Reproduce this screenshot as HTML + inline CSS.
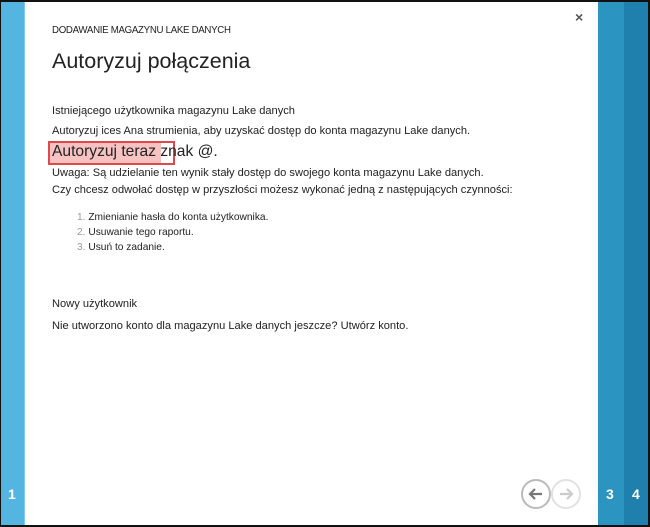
<!DOCTYPE html>
<html><head><meta charset="utf-8"><style>
*{margin:0;padding:0;box-sizing:border-box}
body{width:650px;height:527px;background:#111;position:relative;overflow:hidden;font-family:"Liberation Sans",sans-serif;color:#222}
#l{position:absolute;left:1px;top:2px;width:24px;height:523px;background:#53b5e0;border-right:1px solid #7ecdf0}
#w{position:absolute;left:25px;top:2px;width:573px;height:523px;background:#fff}
#r1{position:absolute;left:598px;top:2px;width:26px;height:523px;background:#2c94c0}
#r2{position:absolute;left:624px;top:2px;width:24px;height:523px;background:#1f80ad}
.n{position:absolute;color:#fff;font-weight:bold;font-size:14px;top:486px}
.t{position:absolute;left:52px;white-space:nowrap;font-size:11.1px}
</style></head><body>
<div id="l"></div><div id="w"></div><div id="r1"></div><div id="r2"></div>
<div class="n" style="left:8px">1</div>
<div class="n" style="left:606px">3</div>
<div class="n" style="left:632px">4</div>
<div style="position:absolute;left:575px;top:9px;font-size:14px;font-weight:bold;color:#555">×</div>
<div class="t" style="top:25px;font-size:9.7px;letter-spacing:-0.3px">DODAWANIE MAGAZYNU LAKE DANYCH</div>
<div class="t" style="top:49px;font-size:21.5px">Autoryzuj połączenia</div>
<div class="t" style="top:105px">Istniejącego użytkownika magazynu Lake danych</div>
<div class="t" style="top:125px">Autoryzuj ices Ana strumienia, aby uzyskać dostęp do konta magazynu Lake danych.</div>
<div style="position:absolute;left:48px;top:141px;width:127px;height:24px;background:#f6c2c2;border:2px solid #e0484a"></div>
<div style="position:absolute;left:161px;top:143px;width:12px;height:20px;background:#fff"></div>
<div class="t" style="top:143px;font-size:15.6px">Autoryzuj teraz znak @.</div>
<div class="t" style="top:167px">Uwaga: Są udzielanie ten wynik stały dostęp do swojego konta magazynu Lake danych.</div>
<div class="t" style="top:184px">Czy chcesz odwołać dostęp w przyszłości możesz wykonać jedną z następujących czynności:</div>
<div class="t" style="left:77px;top:212px;font-size:10.2px"><span style="color:#999">1.</span> Zmienianie hasła do konta użytkownika.</div>
<div class="t" style="left:77px;top:227px;font-size:10.2px"><span style="color:#999">2.</span> Usuwanie tego raportu.</div>
<div class="t" style="left:77px;top:242px;font-size:10.2px"><span style="color:#999">3.</span> Usuń to zadanie.</div>
<div class="t" style="top:298px">Nowy użytkownik</div>
<div class="t" style="top:320px">Nie utworzono konto dla magazynu Lake danych jeszcze? Utwórz konto.</div>
<svg style="position:absolute;left:520px;top:478px" width="64" height="32">
<circle cx="16" cy="16" r="14" fill="none" stroke="#bbb" stroke-width="2"/>
<path d="M22 16H10M15 11l-5 5 5 5" fill="none" stroke="#777" stroke-width="2.2"/>
<circle cx="46" cy="16" r="14" fill="none" stroke="#e2e2e2" stroke-width="2"/>
<path d="M40 16h12M47 11l5 5-5 5" fill="none" stroke="#ccc" stroke-width="2.2"/>
</svg>
</body></html>
